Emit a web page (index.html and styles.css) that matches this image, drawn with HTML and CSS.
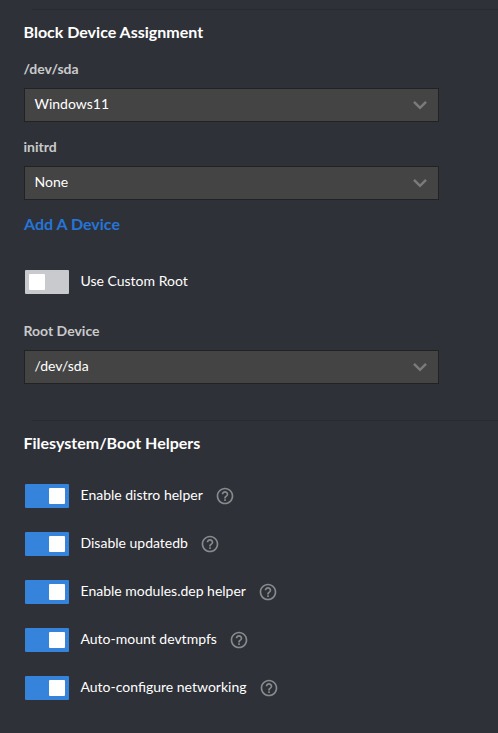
FILE: index.html
```html
<!DOCTYPE html>
<html lang="en">
<head>
<meta charset="utf-8">
<title>Configuration</title>
<link rel="stylesheet" href="styles.css">
</head>
<body>
<svg class="defs" width="0" height="0">
  <symbol id="chevron" viewBox="0 0 16 16"><path d="M2 4.800l6 6 6-6" fill="none" stroke="#7b7b7b" stroke-width="2.500"/></symbol>
  <symbol id="help" viewBox="0 0 24 24"><path fill="#888a8d" d="M11 18h2v-2h-2v2zm1-16C6.480 2 2 6.480 2 12s4.480 10 10 10 10-4.480 10-10S17.520 2 12 2zm0 18c-4.410 0-8-3.590-8-8s3.590-8 8-8 8 3.590 8 8-3.590 8-8 8zm0-14c-2.210 0-4 1.790-4 4h2c0-1.100.9-2 2-2s2 .9 2 2c0 2-3 1.750-3 5h2c0-2.250 3-2.500 3-5 0-2.210-1.790-4-4-4z"/></symbol>
</svg>
<main>
  <section class="devices">
    <hr>
    <h2>Block Device Assignment</h2>
    <div class="field"><div class="label">/dev/sda</div><div class="select"><span>Windows11</span><svg class="chevron"><use href="#chevron"/></svg></div></div>
    <div class="field"><div class="label">initrd</div><div class="select"><span>None</span><svg class="chevron"><use href="#chevron"/></svg></div></div>
    <a class="add">Add A Device</a>
    <div class="row custom"><span class="toggle off"></span><span class="text">Use Custom Root</span></div>
    <div class="field root"><div class="label">Root Device</div><div class="select"><span>/dev/sda</span><svg class="chevron"><use href="#chevron"/></svg></div></div>
  </section>
  <section class="helpers">
    <hr>
    <h2>Filesystem/Boot Helpers</h2>
    <div class="row"><span class="toggle"></span><span class="text">Enable distro helper</span><svg class="help"><use href="#help"/></svg></div>
    <div class="row"><span class="toggle"></span><span class="text">Disable updatedb</span><svg class="help"><use href="#help"/></svg></div>
    <div class="row"><span class="toggle"></span><span class="text">Enable modules.dep helper</span><svg class="help"><use href="#help"/></svg></div>
    <div class="row"><span class="toggle"></span><span class="text">Auto-mount devtmpfs</span><svg class="help"><use href="#help"/></svg></div>
    <div class="row"><span class="toggle"></span><span class="text">Auto-configure networking</span><svg class="help"><use href="#help"/></svg></div>
  </section>
</main>
</body>
</html>
```
FILE: styles.css
```css
* { box-sizing: border-box; }
body { margin: 0; background: #2f3138; color: #fff; font: 14px/18px Lato, sans-serif; }
.defs { display: block; height: 0; }
main { padding-top: 9px; }
section { margin-left: 24px; }
hr { height: 1px; border: 0; margin: 0 0 0 8px; background: #292b2e; }
.devices { height: 411px; }
h2 { margin: 0 0 0 -0.5px; padding-top: 12px; font-size: 16px; line-height: 20px; font-weight: 700; }
.label { margin-left: -0.5px; color: #c9cacb; font-weight: 700; height: 28px; }
.field { height: 78px; padding-top: 18px; }
.select { width: 415px; height: 34px; border: 1px solid #222; background: #444; display: flex; align-items: center; justify-content: space-between; padding: 0 10px 0 9.500px; }
.select span { padding-bottom: 2px; }
.chevron { width: 16px; height: 16px; }
.add { display: block; margin-top: 16px; color: #2575d8; font-size: 16px; line-height: 20px; font-weight: 700; }
.row { display: flex; align-items: center; height: 48px; }
.text { padding-bottom: 2px; }
.toggle { width: 44px; height: 24px; margin: 0 11.500px 0 1px; padding: 4px; background: #3683dc; border-radius: 1px; display: flex; justify-content: flex-end; }
.toggle::before { content: ""; width: 16px; height: 16px; background: #fff; border-radius: 1px; }
.toggle.off { background: #c9cacd; justify-content: flex-start; }
.custom { margin-top: 24px; }
.root { padding-top: 16px; }
.help { width: 20px; height: 20px; margin-left: 12.500px; }
.helpers h2 { margin-bottom: 19px; }
```
